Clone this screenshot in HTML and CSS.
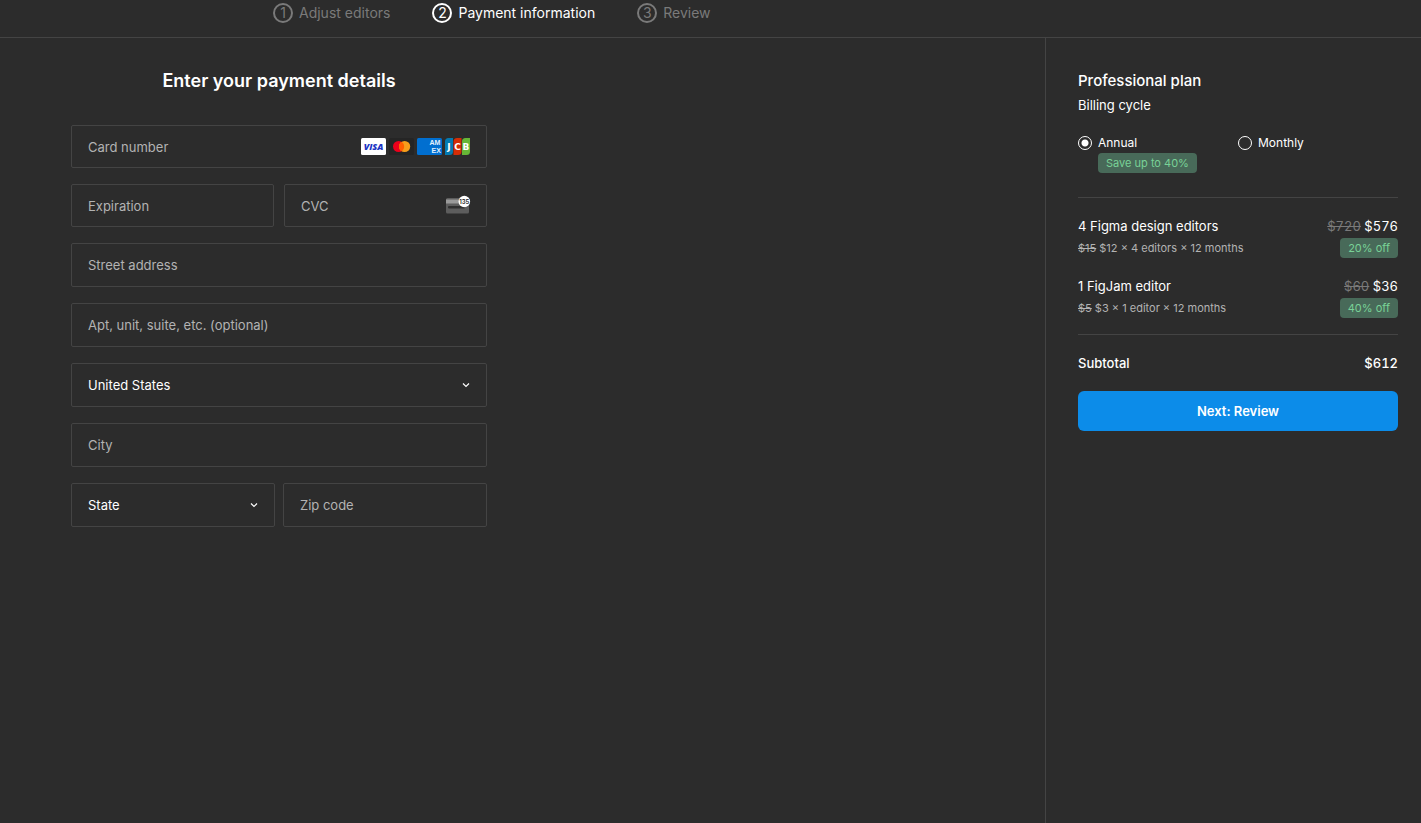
FILE: index.html
```html
<!DOCTYPE html>
<html lang="en">
<head>
<meta charset="utf-8">
<meta name="viewport" content="width=device-width, initial-scale=1">
<title>Payment information</title>
<link rel="stylesheet" href="styles.css">
</head>
<body>
<header class="topbar">
  <ol class="steps">
    <li class="step"><span class="step-number">1</span>Adjust editors</li>
    <li class="step step-current" aria-current="step"><span class="step-number">2</span>Payment information</li>
    <li class="step"><span class="step-number">3</span>Review</li>
  </ol>
</header>
<div class="layout">
  <main class="content">
    <form class="payment-form" id="payment">
      <h1 class="form-title">Enter your payment details</h1>
      <div class="field field-card">
        <input class="control" type="text" placeholder="Card number" aria-label="Card number">
        <span class="brands" aria-hidden="true">
          <svg class="brand" viewBox="0 0 25 17"><rect width="25" height="17" rx="1.5" fill="#fff"/><text class="visa-text" x="12.5" y="12.2">VISA</text></svg>
          <svg class="brand" viewBox="0 0 25 17"><rect width="25" height="17" rx="1.5" fill="#252525"/><circle cx="9.6" cy="8.5" r="5.6" fill="#eb001b"/><circle cx="15.6" cy="8.5" r="5.6" fill="#f79e1b"/><path d="M12.6 3.8a5.6 5.6 0 0 1 0 9.4a5.6 5.6 0 0 1 0-9.4z" fill="#ff5f00"/></svg>
          <svg class="brand" viewBox="0 0 25 17"><rect width="25" height="17" rx="1.5" fill="#016fd0"/><text class="amex-text" x="12.5" y="7.4">AM</text><text class="amex-text" x="14.5" y="15.3">EX</text></svg>
          <svg class="brand" viewBox="0 0 25 17"><path d="M3.500 0H8v13.500A3.500 3.500 0 0 1 4.500 17H0V3.500A3.500 3.500 0 0 1 3.500 0z" fill="#047ab1"/><path d="M12 0h4.500v13.500A3.500 3.500 0 0 1 13 17H8.500V3.500A3.500 3.500 0 0 1 12 0z" fill="#d42d06"/><path d="M20.500 0H25v13.500a3.500 3.500 0 0 1-3.500 3.500H17V3.500A3.500 3.500 0 0 1 20.500 0z" fill="#67b637"/><text class="jcb-text" x="4" y="12">J</text><text class="jcb-text" x="12.500" y="12">C</text><text class="jcb-text" x="21" y="12">B</text></svg>
        </span>
      </div>
      <div class="row row-card">
        <div class="field field-card"><input class="control" type="text" placeholder="Expiration" aria-label="Expiration"></div>
        <div class="field field-card">
          <input class="control" type="text" placeholder="CVC" aria-label="CVC">
          <svg class="cvc-icon" viewBox="0 1 24 20" aria-hidden="true"><rect y="3" width="23" height="15.500" rx="1.500" fill="#5d5d5d"/><rect y="4.500" width="23" height="4" fill="#9a9a9a"/><rect x="2" y="11" width="17" height="2.500" rx="1" fill="#303030"/><circle cx="18.300" cy="6.500" r="5.800" fill="#fff"/><text class="cvc-text" x="18.300" y="9">135</text></svg>
        </div>
      </div>
      <div class="field"><input class="control" type="text" placeholder="Street address" aria-label="Street address"></div>
      <div class="field"><input class="control" type="text" placeholder="Apt, unit, suite, etc. (optional)" aria-label="Apartment, unit or suite"></div>
      <div class="field">
        <select class="control" aria-label="Country"><option>United States</option></select>
        <svg class="chevron" viewBox="0 0 8 8" aria-hidden="true"><path d="M1 2.500L4 5.500L7 2.500"/></svg>
      </div>
      <div class="field"><input class="control" type="text" placeholder="City" aria-label="City"></div>
      <div class="row">
        <div class="field">
          <select class="control" aria-label="State"><option>State</option></select>
          <svg class="chevron" viewBox="0 0 8 8" aria-hidden="true"><path d="M1 2.500L4 5.500L7 2.500"/></svg>
        </div>
        <div class="field"><input class="control" type="text" placeholder="Zip code" aria-label="Zip code"></div>
      </div>
    </form>
  </main>
  <aside class="summary">
    <h2 class="plan-title">Professional plan</h2>
    <fieldset class="billing">
      <legend class="billing-title">Billing cycle</legend>
      <div class="cycles">
        <div class="cycle">
          <input class="radio" type="radio" name="cycle" id="annual" checked>
          <label for="annual">Annual</label>
          <span class="badge">Save up to 40%</span>
        </div>
        <div class="cycle">
          <input class="radio" type="radio" name="cycle" id="monthly">
          <label for="monthly">Monthly</label>
        </div>
      </div>
    </fieldset>
    <div class="items">
      <div class="item">
        <span class="item-name">4 Figma design editors</span>
        <span class="price"><s>$720</s> $576</span>
        <span class="item-detail"><s>$15</s> $12 × 4 editors × 12 months</span>
        <span class="badge">20% off</span>
      </div>
      <div class="item">
        <span class="item-name">1 FigJam editor</span>
        <span class="price"><s>$60</s> $36</span>
        <span class="item-detail"><s>$5</s> $3 × 1 editor × 12 months</span>
        <span class="badge">40% off</span>
      </div>
    </div>
    <div class="subtotal"><span>Subtotal</span><span class="price">$612</span></div>
    <button class="next" type="submit" form="payment">Next: Review</button>
  </aside>
</div>
</body>
</html>
```
FILE: styles.css
```css
* { box-sizing: border-box; }

body {
  margin: 0;
  min-height: 100vh;
  display: flex;
  flex-direction: column;
  background: #2c2c2c;
  color: #fff;
  font: 400 13px/20px Inter, "Liberation Sans", sans-serif;
}

.topbar {
  padding: 3px 0 14px 273px;
  border-bottom: 1px solid #444;
}

.steps {
  display: flex;
  gap: 42px;
  margin: 0;
  padding: 0;
  list-style: none;
  font-size: 14px;
}

.step {
  display: flex;
  align-items: center;
  gap: 6px;
  color: #7a7a7a;
}

.step-current { color: #fff; }

.step-number {
  width: 20px;
  height: 20px;
  border: 2px solid currentColor;
  border-radius: 50%;
  line-height: 16px;
  text-align: center;
}

.layout {
  flex: 1;
  display: grid;
  grid-template-columns: 1fr 376px;
}

.content { padding: 31px 71px; }

.payment-form {
  max-width: 416px;
  display: flex;
  flex-direction: column;
  gap: 16px;
}

.form-title {
  margin: 0 0 16px;
  font-size: 18px;
  font-weight: 600;
  line-height: 24px;
  text-align: center;
}

.row {
  display: grid;
  grid-template-columns: repeat(2, minmax(0, 1fr));
  gap: 8px;
}

.row-card { gap: 10px; }

.field {
  display: flex;
  align-items: center;
  height: 44px;
  padding-right: 16px;
  border: 1px solid #444;
  border-radius: 2px;
}

.field-card { height: 43px; }

.control {
  flex: 1;
  min-width: 0;
  height: 100%;
  padding: 0 0 0 16px;
  border: 0;
  outline: 0;
  appearance: none;
  background: transparent;
  color: #fff;
  font: inherit;
}

.control::placeholder { color: #b3b3b3; opacity: 1; }

.control option { background: #2c2c2c; }

.brands { display: flex; gap: 3px; }

.brand { width: 25px; height: 17px; }

.visa-text { font: italic 800 9px "Open Sans", sans-serif; fill: #1a34c4; text-anchor: middle; }

.amex-text { font: 700 7px "Liberation Sans", sans-serif; fill: #e4f1fc; }

.jcb-text { font: 700 9px "DejaVu Sans", sans-serif; fill: #fff; text-anchor: middle; }

.cvc-text { font: 600 6px Inter, sans-serif; fill: #222; text-anchor: middle; }

.cvc-icon { width: 24px; height: 20px; overflow: visible; }

.chevron {
  width: 8px;
  height: 8px;
  fill: none;
  stroke: #fff;
  stroke-width: 1.2;
  pointer-events: none;
}

.summary {
  padding: 31px 23px 32px 32px;
  border-left: 1px solid #444;
}

.plan-title {
  margin: 0;
  font-size: 15px;
  font-weight: 500;
  line-height: 24px;
}

.billing {
  margin: 0;
  padding: 2px 0 24px;
  border: 0;
  border-bottom: 1px solid #444;
}

.billing-title { padding: 2px 0 0; }

.cycles {
  display: grid;
  grid-template-columns: 1fr 1fr;
  padding-top: 16px;
}

.cycle {
  display: grid;
  grid-template-columns: 14px 1fr;
  column-gap: 6px;
  align-content: start;
  align-items: center;
  font-size: 12px;
}

.radio {
  width: 14px;
  height: 14px;
  margin: 0;
  border: 1px solid #fff;
  border-radius: 50%;
  appearance: none;
}

.radio:checked { background: radial-gradient(circle, #fff 3px, transparent 4px); }

.badge {
  justify-self: start;
  padding: 0 8px;
  border-radius: 4px;
  background: #486a59;
  color: #79d297;
  font-size: 11px;
}

.cycle .badge { grid-column: 2; }

.items {
  display: grid;
  gap: 18px;
  padding: 18px 0 16px;
  border-bottom: 1px solid #444;
}

.item {
  display: grid;
  grid-template-columns: 1fr auto;
  row-gap: 2px;
}

.price { justify-self: end; font-variant-numeric: tabular-nums; }

.price s { color: #7a7a7a; }

.item-detail { color: #b3b3b3; font-size: 11px; }

.item .badge { justify-self: end; }

.subtotal {
  display: flex;
  justify-content: space-between;
  padding: 18px 0;
  font-weight: 500;
}

.next {
  width: 100%;
  height: 40px;
  border: 0;
  border-radius: 6px;
  background: #0c8ce9;
  color: #fff;
  font: inherit;
  font-weight: 600;
}
```
